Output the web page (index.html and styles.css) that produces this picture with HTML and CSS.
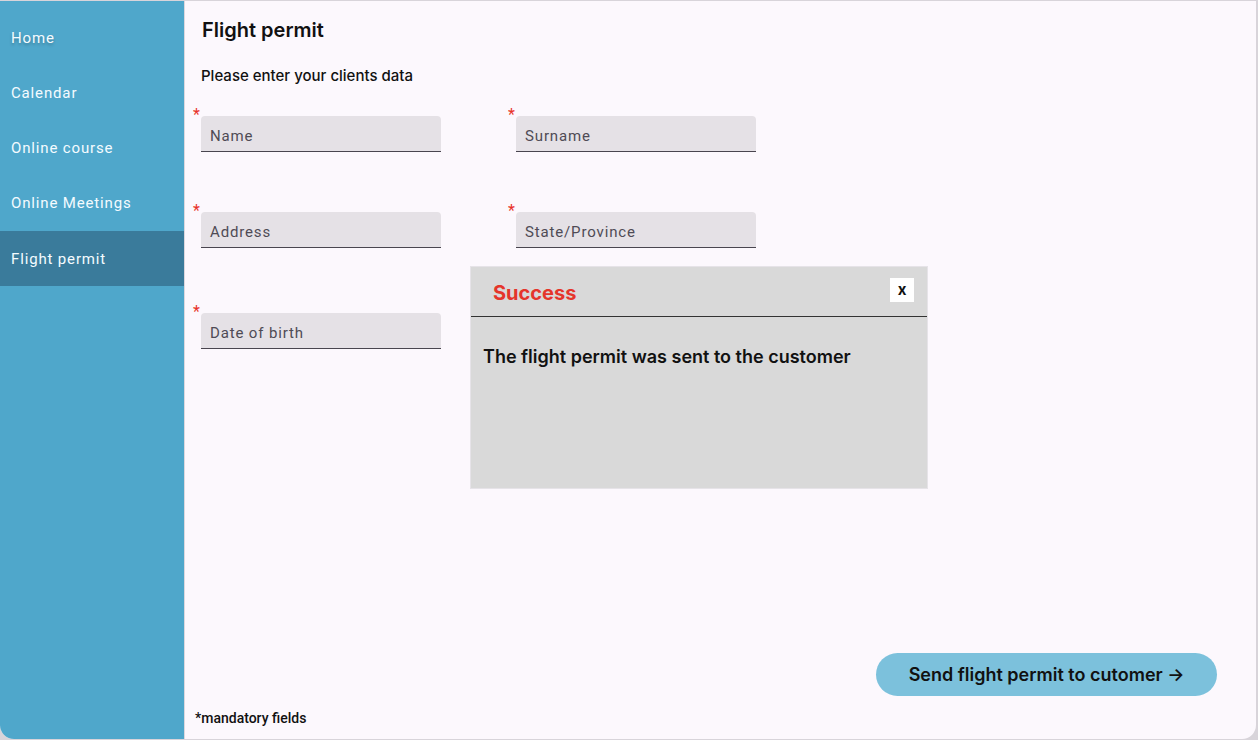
FILE: index.html
```html
<!DOCTYPE html>
<html lang="en">
<head>
<meta charset="utf-8">
<title>Flight permit</title>
<link rel="stylesheet" href="styles.css">
</head>
<body>
<div class="app">
  <nav class="sidebar">
    <a class="nav-item nav-home">Home</a>
    <a class="nav-item">Calendar</a>
    <a class="nav-item">Online course</a>
    <a class="nav-item">Online Meetings</a>
    <a class="nav-item active">Flight permit</a>
  </nav>
  <main class="main">
    <h1 class="title">Flight permit</h1>
    <p class="subtitle">Please enter your clients data</p>
    <div class="form">
      <div class="field"><span class="req">*</span><span class="ph">Name</span></div>
      <div class="field"><span class="req">*</span><span class="ph">Surname</span></div>
      <div class="field"><span class="req">*</span><span class="ph">Address</span></div>
      <div class="field"><span class="req">*</span><span class="ph">State/Province</span></div>
      <div class="field field-last"><span class="req">*</span><span class="ph">Date of birth</span></div>
    </div>
    <div class="spacer"></div>
    <div class="actions">
      <button class="send">Send flight permit to cutomer →</button>
    </div>
    <p class="foot">*mandatory fields</p>
  </main>
  <div class="modal">
    <div class="modal-head">
      <span class="modal-title">Success</span>
      <span class="close">x</span>
    </div>
    <p class="modal-body">The flight permit was sent to the customer</p>
  </div>
</div>
</body>
</html>
```

FILE: styles.css
```css
html, body {
  margin: 0;
  padding: 0;
}
body {
  background: #d8d4da;
  width: 1258px;
  height: 740px;
  overflow: hidden;
}
.app {
  position: relative;
  display: flex;
  width: 1256px;
  height: 738px;
  margin-top: 1px;
  background: #fcf8fd;
  border-radius: 0 0 14px 14px;
  overflow: hidden;
}
.sidebar {
  width: 184px;
  flex: none;
  background: #4fa7cb;
  border-right: 1px solid #dcd8de;
  padding-top: 9px;
  display: flex;
  flex-direction: column;
}
.nav-item {
  height: 55px;
  display: flex;
  align-items: center;
  padding-left: 11px;
  font-family: Roboto, "Noto Sans", sans-serif;
  font-size: 15px;
  font-weight: 400;
  letter-spacing: 0.85px;
  color: #f4fbff;
}
.nav-home {
  text-shadow: 0 2px 3px rgba(0, 0, 0, 0.25);
}
.nav-item.active {
  background: #3a7b9b;
  margin-top: 1px;
}
.main {
  flex: 1;
  display: flex;
  flex-direction: column;
  padding: 0 39px 0 10px;
  font-family: Inter, "Noto Sans", sans-serif;
  color: #111;
}
.title {
  margin: 17px 0 0 7px;
  font-size: 20px;
  line-height: 24px;
  font-weight: 600;
  color: #111;
}
.subtitle {
  margin: 25px 0 0 6px;
  font-size: 15px;
  line-height: 18px;
  font-weight: 500;
}
.form {
  margin: 31px 0 0 6px;
  display: grid;
  grid-template-columns: 240px 240px;
  column-gap: 75px;
  row-gap: 60px;
}
.field {
  position: relative;
  height: 35px;
  background: #e5e1e6;
  border-radius: 4px 4px 0 0;
  border-bottom: 1px solid #49454f;
  display: flex;
  align-items: center;
  padding-left: 9px;
  font-family: Roboto, "Noto Sans", sans-serif;
  font-size: 15px;
  letter-spacing: 0.85px;
  color: #4f4b55;
}
.field-last {
  margin-top: 5px;
}
.req {
  position: absolute;
  left: -8px;
  top: -9px;
  color: #e8332a;
  font-size: 16px;
  line-height: 16px;
  letter-spacing: 0;
}
.ph {
  padding-top: 5px;
}
.spacer {
  flex: 1;
}
.actions {
  display: flex;
  justify-content: flex-end;
}
.send {
  width: 341px;
  height: 43px;
  border: none;
  border-radius: 22px;
  background: #7cc1dc;
  font-family: Inter, "Noto Sans", sans-serif;
  font-size: 18px;
  font-weight: 600;
  color: #111;
  padding: 0;
}
.foot {
  margin: 14px 0 13px 0;
  font-family: Roboto, "Noto Sans", sans-serif;
  font-size: 14px;
  line-height: 16px;
  font-weight: 500;
  color: #111;
}
.modal {
  position: absolute;
  left: 470px;
  top: 265px;
  width: 458px;
  height: 223px;
  background: #d9d9d9;
  border: 1px solid #e6e3e8;
  box-sizing: border-box;
  font-family: Inter, "Noto Sans", sans-serif;
}
.modal-head {
  height: 49px;
  border-bottom: 1px solid #333;
  display: flex;
  align-items: center;
  justify-content: space-between;
  padding: 0 13px 0 22px;
}
.modal-title {
  color: #e5352b;
  font-size: 20px;
  font-weight: 700;
  padding-top: 2px;
}
.close {
  width: 24px;
  height: 24px;
  background: #ffffff;
  display: flex;
  align-items: center;
  justify-content: center;
  font-size: 15px;
  font-weight: 700;
  color: #111;
  margin-top: -4px;
}
.modal-body {
  margin: 29px 0 0 12px;
  font-size: 18px;
  font-weight: 600;
  color: #111;
}
```
